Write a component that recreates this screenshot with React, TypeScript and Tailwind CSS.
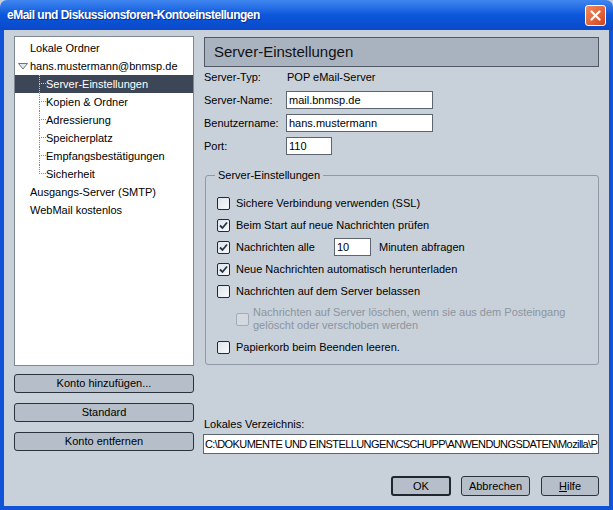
import React from "react";

function Check({ checked, disabled }: { checked?: boolean; disabled?: boolean }) {
  return (
    <div
      className={
        "w-[13px] h-[13px] shrink-0 rounded-[2px] border flex items-center justify-center " +
        (disabled ? "border-[#a3acb6] bg-[#d3d9df]" : "border-[#1f2b38] bg-gradient-to-br from-[#dfe5ec] to-[#f7f9fb]")
      }
    >
      {checked && (
        <svg width="11" height="11" viewBox="0 0 11 11">
          <path d="M2 5.5 L4.5 8 L9 2.5" fill="none" stroke="#2a3542" strokeWidth="1.8" />
        </svg>
      )}
    </div>
  );
}

function Btn({ children, className = "" }: { children: React.ReactNode; className?: string }) {
  return (
    <div
      className={
        "h-[19px] rounded-[3px] border border-[#2a323c] bg-[#b5bec9] flex items-center justify-center " + className
      }
    >
      {children}
    </div>
  );
}

function TreeChild({ label, selected, last }: { label: string; selected?: boolean; last?: boolean }) {
  const lineColor = selected ? "border-[#c8ccd2]" : "border-[#8a8a8a]";
  return (
    <div className={"h-[18px] flex " + (selected ? "bg-[#3c4656] text-white" : "")}>
      <div className="w-[24px] shrink-0" />
      <div className="w-[7px] shrink-0 flex flex-col">
        <div className={"h-[9px] border-l border-b border-dotted " + lineColor} />
        <div className={"flex-1 " + (last ? "" : "border-l border-dotted " + lineColor)} />
      </div>
      <div className="flex items-center">{label}</div>
    </div>
  );
}

export default function App() {
  return (
    <div className="w-[613px] h-[510px] flex flex-col font-['Liberation_Sans',Arial,sans-serif] text-[11px] text-black bg-[#c8d0d9]">
      {/* Title bar */}
      <div className="h-[30px] shrink-0 rounded-t-[7px] bg-gradient-to-b from-[#3f86ef] via-[#0b57dc] to-[#0a49c9] flex items-center justify-between pl-[7px] pr-[7px]">
        <span className="text-white font-bold text-[12px] tracking-[-0.5px] [text-shadow:1px_1px_0_#0a2f8a]">
          eMail und Diskussionsforen-Kontoeinstellungen
        </span>
        <div className="w-[21px] h-[21px] rounded-[3px] border border-white bg-gradient-to-br from-[#f08a5e] to-[#d2431b] flex items-center justify-center">
          <svg width="11" height="11" viewBox="0 0 11 11">
            <path d="M1.5 1.5 L9.5 9.5 M9.5 1.5 L1.5 9.5" stroke="white" strokeWidth="2.2" strokeLinecap="round" />
          </svg>
        </div>
      </div>

      {/* Body */}
      <div className="flex-1 flex border-x-4 border-b-4 border-[#1052d8] pl-[10px] pr-[9px]">
        {/* Left column */}
        <div className="w-[180px] shrink-0 pt-[6px] flex flex-col">
          <div className="h-[330px] border border-[#7d8691] bg-white pt-[2px]">
            <div className="h-[18px] flex items-center pl-[15px]">Lokale Ordner</div>
            <div className="h-[18px] flex items-center pl-[3px]">
              <svg width="10" height="7" viewBox="0 0 10 7" className="mr-[2px]">
                <polygon points="0.5,0.5 9.5,0.5 5,6" fill="#e4e8ec" stroke="#6b747e" strokeWidth="1" />
              </svg>
              hans.mustermann@bnmsp.de
            </div>
            <TreeChild label="Server-Einstellungen" selected />
            <TreeChild label="Kopien & Ordner" />
            <TreeChild label="Adressierung" />
            <TreeChild label="Speicherplatz" />
            <TreeChild label="Empfangsbestätigungen" />
            <TreeChild label="Sicherheit" last />
            <div className="h-[18px] flex items-center pl-[15px]">Ausgangs-Server (SMTP)</div>
            <div className="h-[18px] flex items-center pl-[15px]">WebMail kostenlos</div>
          </div>
          <Btn className="mt-[8px]">Konto hinzufügen...</Btn>
          <Btn className="mt-[10px]">Standard</Btn>
          <Btn className="mt-[10px]">Konto entfernen</Btn>
        </div>

        {/* Right column */}
        <div className="w-[397px] shrink-0 ml-[9px] pt-[7px] flex flex-col">
          <div className="h-[30px] ml-[1px] mr-[1px] border border-[#4f5864] bg-[#a9b3c0] flex items-center pl-[9px] text-[15px] text-[#111]">
            Server-Einstellungen
          </div>

          <div className="mt-[1px] h-[18px] flex items-center">
            <div className="w-[83px] pl-[1px]">Server-Typ:</div>
            <div className="pl-[1px]">POP eMail-Server</div>
          </div>
          <div className="mt-[5px] h-[18px] flex items-center">
            <div className="w-[83px] pl-[1px]">Server-Name:</div>
            <div className="w-[147px] h-[18px] border border-[#5d6670] bg-white flex items-center pl-[2px]">mail.bnmsp.de</div>
          </div>
          <div className="mt-[5px] h-[18px] flex items-center">
            <div className="w-[83px] pl-[1px]">Benutzername:</div>
            <div className="w-[147px] h-[18px] border border-[#5d6670] bg-white flex items-center pl-[2px]">hans.mustermann</div>
          </div>
          <div className="mt-[5px] h-[18px] flex items-center">
            <div className="w-[83px] pl-[1px]">Port:</div>
            <div className="w-[46px] h-[18px] border border-[#5d6670] bg-white flex items-center pl-[2px]">110</div>
          </div>

          <fieldset className="mt-[14px] ml-[2px] mr-[1px] border border-[#8f9aa6] rounded-[3px] pb-[8px]">
            <legend className="ml-[9px] px-[3px] leading-[13px]">Server-Einstellungen</legend>
            <div className="pt-[12px] pl-[11px] flex flex-col">
              <div className="h-[18px] flex items-center gap-[6px]">
                <Check />
                <span>Sichere Verbindung verwenden (SSL)</span>
              </div>
              <div className="mt-[4px] h-[18px] flex items-center gap-[6px]">
                <Check checked />
                <span>Beim Start auf neue Nachrichten prüfen</span>
              </div>
              <div className="mt-[4px] h-[18px] flex items-center gap-[6px]">
                <Check checked />
                <span className="w-[92px]">Nachrichten alle</span>
                <div className="w-[37px] h-[18px] border border-[#5d6670] bg-white flex items-center pl-[2px]">10</div>
                <span className="ml-[2px]">Minuten abfragen</span>
              </div>
              <div className="mt-[4px] h-[18px] flex items-center gap-[6px]">
                <Check checked />
                <span>Neue Nachrichten automatisch herunterladen</span>
              </div>
              <div className="mt-[4px] h-[18px] flex items-center gap-[6px]">
                <Check />
                <span>Nachrichten auf dem Server belassen</span>
              </div>
              <div className="mt-[6px] pl-[19px] flex items-center gap-[4px]">
                <Check disabled />
                <span className="leading-[13px] text-[#8c959f]">
                  Nachrichten auf Server löschen, wenn sie aus dem Posteingang
                  <br />
                  gelöscht oder verschoben werden
                </span>
              </div>
              <div className="mt-[6px] h-[18px] flex items-center gap-[6px]">
                <Check />
                <span>Papierkorb beim Beenden leeren.</span>
              </div>
            </div>
          </fieldset>

          <div className="mt-[52px] h-[14px] leading-[14px] pl-[1px]">Lokales Verzeichnis:</div>
          <div className="mt-[3px] mr-[1px] h-[20px] border border-[#5d6670] bg-white flex items-center pl-[1px] overflow-hidden whitespace-nowrap tracking-[-0.6px]">
            C:\DOKUMENTE UND EINSTELLUNGEN\CSCHUPP\ANWENDUNGSDATEN\Mozilla\Profiles
          </div>

          <div className="mt-[22px] mr-[1px] flex justify-end gap-[10px]">
            <div className="w-[60px] h-[20px] rounded-[3px] border-2 border-[#1f262e] bg-[#b5bec9] flex items-center justify-center">
              OK
            </div>
            <div className="w-[69px] h-[20px] rounded-[3px] border border-[#2a323c] bg-[#b5bec9] flex items-center justify-center">
              Abbrechen
            </div>
            <div className="w-[58px] h-[20px] ml-[1px] rounded-[3px] border border-[#2a323c] bg-[#b5bec9] flex items-center justify-center">
              <span>
                <span className="underline">H</span>ilfe
              </span>
            </div>
          </div>
        </div>
      </div>
    </div>
  );
}
